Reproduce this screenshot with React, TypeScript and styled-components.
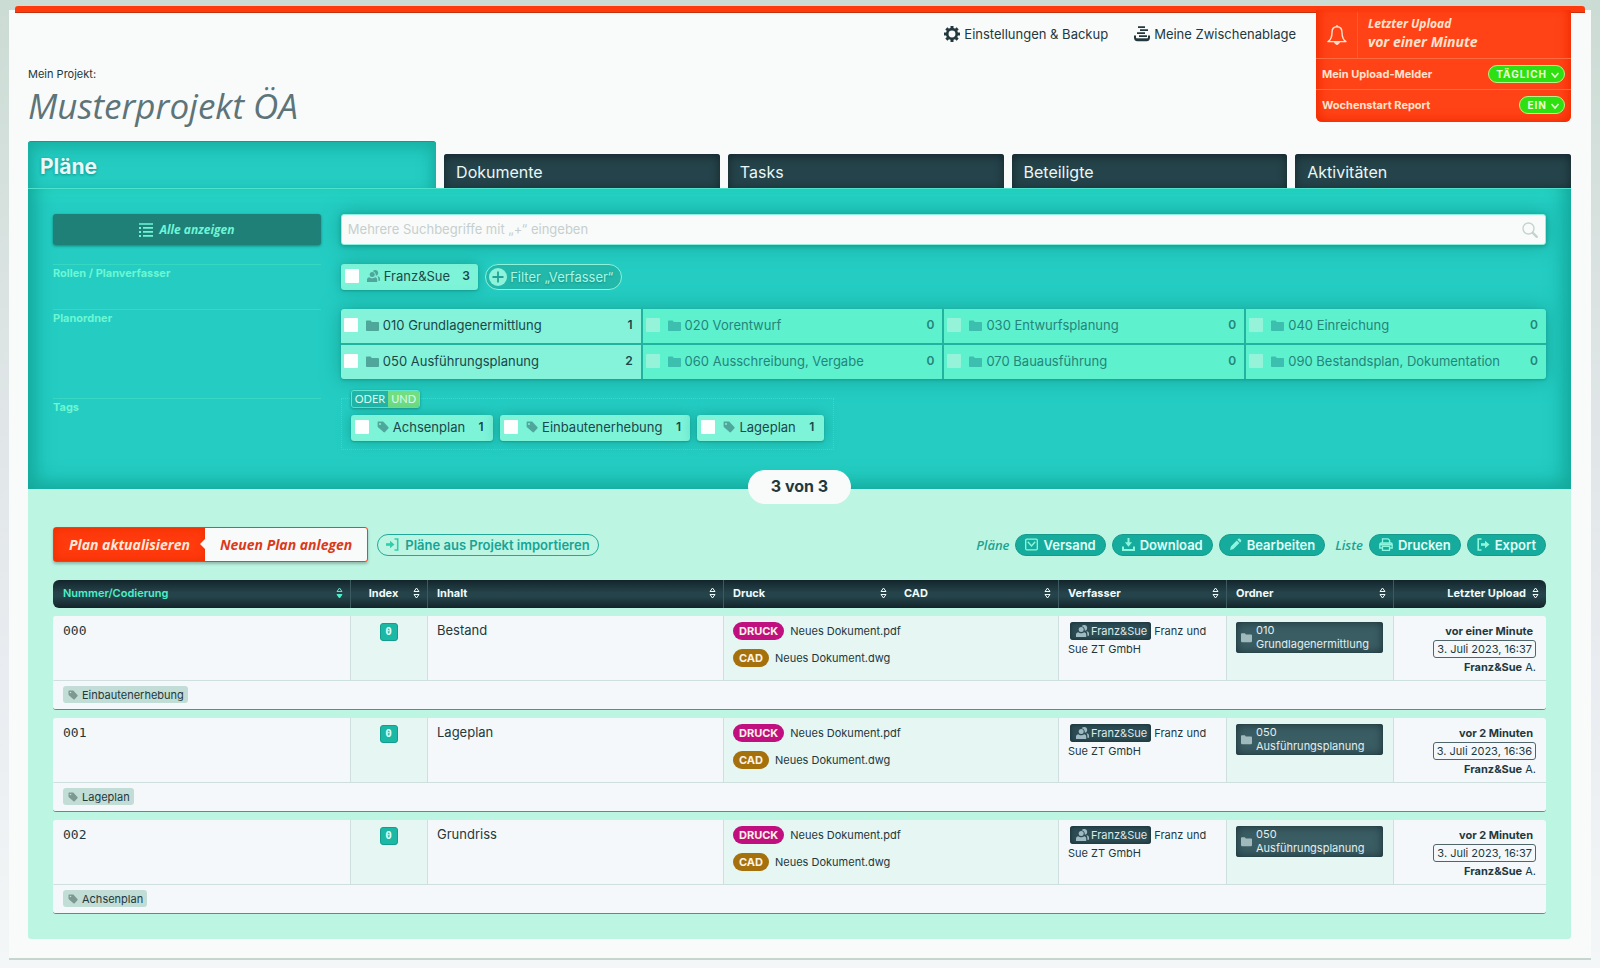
import React from "react";
import styled, { createGlobalStyle, css } from "styled-components";

const sans = `Inter, "Liberation Sans", sans-serif`;
const display = `"Open Sans", "Noto Sans", sans-serif`;
const mono = `"DejaVu Sans Mono", monospace`;

const c = {
  paper: "#f9fbfa",
  ink: "#23383d",
  red: "#ff3a0c",
  redDark: "#c5320f",
  teal: "#24ccc2",
  mint: "#bdf5e3",
  dark: "#25434a",
  darker: "#172c32",
};

const GlobalStyle = createGlobalStyle`
  *, *::before, *::after { box-sizing: border-box; }
  html { background: linear-gradient(#cbdcd4, #dde4e4 35%, #e9ecf0 70%, #f4f7f7); min-height: 100%; }
  body { margin: 0; font-family: ${sans}; font-size: 11px; line-height: 18px; color: ${c.ink}; }
  button, input, select { font: inherit; color: inherit; margin: 0; }
  button { cursor: pointer; }
  a { color: inherit; text-decoration: none; }
`;

/* ---------- icons ---------- */

const Svg = styled.svg`
  display: block;
  flex: none;
  overflow: visible;
`;

const GearIcon = () => (
  <Svg width="16" height="16" viewBox="0 0 16 16" fill="none" stroke="currentColor">
    <circle cx="8" cy="8" r="4.8" strokeWidth="2.7" />
    {[0, 45, 90, 135, 180, 225, 270, 315].map((a) => (
      <path key={a} d="M8 0v2.6" strokeWidth="3" transform={`rotate(${a} 8 8)`} />
    ))}
  </Svg>
);

const StackIcon = () => (
  <Svg width="16" height="16" viewBox="0 0 16 16" fill="none" stroke="currentColor" strokeWidth="1.8">
    <path d="M4 1.2h7M6 4.2h8M3 7.2h8M5 10.2h8" />
    <path d="M1 9.4v2.2c0 1.6 1 2.6 2.4 2.6h9.2c1.4 0 2.4-1 2.4-2.6V9.4" strokeWidth="2" />
    <path d="M2 13.4h12" strokeWidth="2.2" />
  </Svg>
);

const BellIcon = () => (
  <Svg width="20" height="22" viewBox="0 0 20 22" fill="none" stroke="currentColor" strokeWidth="1.4" strokeLinejoin="round">
    <path d="M10 1v2M10 2.8c-3.4 0-5 2.7-5 5.6 0 4.6-1 7.2-4 9.2h18c-3-2-4-4.6-4-9.2 0-2.9-1.6-5.6-5-5.6z" />
    <path d="M7.6 18.2c.3 1.4 1.2 2.2 2.4 2.2s2.1-.8 2.4-2.2z" fill="currentColor" strokeWidth="1" />
  </Svg>
);

const ListIcon = () => (
  <Svg width="14" height="14" viewBox="0 0 14 14" fill="none" stroke="currentColor" strokeWidth="1.6">
    <path d="M0 1h14M4 4.900h10M4 8.900h10M4 12.900h10" />
    <path d="M0 4.900h2M0 8.900h2M0 12.900h2" strokeWidth="2" />
  </Svg>
);

const SearchIcon = () => (
  <Svg width="16" height="16" viewBox="0 0 16 16" fill="none" stroke="currentColor">
    <circle cx="6.5" cy="6.5" r="5.5" strokeWidth="1.4" />
    <path d="M10.8 10.8l4 4" strokeWidth="2.4" strokeLinecap="round" />
  </Svg>
);

const UsersIcon = () => (
  <Svg width="13" height="12" viewBox="0 0 13 12" fill="currentColor">
    <circle cx="5.2" cy="4.6" r="2.5" />
    <path d="M0 12V9.600C0 8.200 1 7.400 2.300 7.200c.9.800 1.800 1.100 2.900 1.100s2-.3 2.900-1.100c1.300.2 2.100 1 2.100 2.400V12z" />
    <path d="M5.600 1.200C6.300.4 7.200 0 8.200 0c1.800 0 3 1.200 3 2.900 0 1.500-1 2.600-2.400 2.800.1-2.500-1-4.200-3.200-4.500zM10.300 6.300c1.900.1 2.700 1.100 2.700 2.700v1.800h-1.600C11.500 8.700 11.300 7.300 10.300 6.300z" />
  </Svg>
);

const FolderIcon = ({ size = 13 }: { size?: number }) => (
  <Svg width={size} height={size} viewBox="0 0 13 13" fill="currentColor">
    <path d="M0 2.500c0-.6.400-1 1-1h3.600l1.200 1.600H12c.6 0 1 .4 1 1V11c0 .5-.4 1-1 1H1c-.6 0-1-.5-1-1z" />
  </Svg>
);

const TagIcon = ({ size = 12 }: { size?: number }) => (
  <Svg width={size} height={size} viewBox="0 0 12 12" fill="currentColor">
    <path fillRule="evenodd" d="M.6 1.500c0-.6.400-1 1-1h4c.4 0 .7.1 1 .4l4.700 5.200c.5.500.5 1 0 1.500l-3.300 3.500c-.5.500-1 .5-1.500 0L1 6.200a1.500 1.500 0 0 1-.4-1zM3 2a1 1 0 1 0 0 2 1 1 0 0 0 0-2z" />
  </Svg>
);

const PlusIcon = () => (
  <Svg width="18" height="18" viewBox="0 0 18 18">
    <circle cx="9" cy="9" r="9" fill="#8ff3dc" />
    <path d="M9 3.5v11M3.5 9h11" stroke="#1fa497" strokeWidth="1.8" />
  </Svg>
);

const ImportIcon = () => (
  <Svg width="13" height="13" viewBox="0 0 13 13" fill="none" stroke="currentColor" strokeWidth="1.6">
    <path d="M8.5 1h3.200v11H8.500" />
    <path d="M0 6.500h5" strokeWidth="2.600" />
    <path d="M4 2.800l4.500 3.700L4 10.200z" fill="currentColor" stroke="none" />
  </Svg>
);

const MailIcon = () => (
  <Svg width="13" height="13" viewBox="0 0 13 13" fill="none" stroke="currentColor" strokeWidth="1.3">
    <path d="M1.800 1.200h9.400c.6 0 1.100.5 1.100 1.100v8.400c0 .6-.5 1.100-1.100 1.100H1.800c-.6 0-1.100-.5-1.100-1.100V2.300c0-.6.500-1.100 1.100-1.100z" />
    <path d="M2.800 3.800l3.700 4.200 3.700-4.200" strokeWidth="1.4" />
  </Svg>
);

const DownloadIcon = () => (
  <Svg width="13" height="13" viewBox="0 0 13 13" fill="none" stroke="currentColor" strokeWidth="2">
    <path d="M1 8.500v3.500h11V8.500" />
    <path d="M6.500 0v5" />
    <path d="M3 4.200h7L6.500 8.800z" fill="currentColor" stroke="none" />
  </Svg>
);

const PencilIcon = () => (
  <Svg width="13" height="13" viewBox="0 0 13 13" fill="currentColor">
    <path d="M9.300.8a1.100 1.100 0 0 1 1.500 0L12 2a1.100 1.100 0 0 1 0 1.500l-.9.900-2.700-2.700zM7.700 2.400l2.700 2.700-6 6L1 12l.9-3.500z" />
  </Svg>
);

const PrinterIcon = () => (
  <Svg width="14" height="13" viewBox="0 0 14 13" fill="none" stroke="currentColor" strokeWidth="1.3">
    <path d="M3.500 5V.8h5.600L10.600 2.300V5" />
    <path d="M3 10H.8V6.500c0-.8.600-1.500 1.400-1.500h9.600c.8 0 1.400.7 1.400 1.500V10H11" />
    <path d="M1 5.500h12v2H1z" fill="currentColor" stroke="none" />
    <path d="M3.500 8.300h7v4h-7z" />
  </Svg>
);

const ExportIcon = () => (
  <Svg width="13" height="13" viewBox="0 0 13 13" fill="none" stroke="currentColor" strokeWidth="1.6">
    <path d="M4.500 1H1.200v11h3.300" />
    <path d="M4 6.500h5" strokeWidth="2.600" />
    <path d="M8 2.800l4.500 3.700L8 10.200z" fill="currentColor" stroke="none" />
  </Svg>
);

const ChevronIcon = () => (
  <Svg width="8" height="6" viewBox="0 0 8 6" fill="none" stroke="currentColor" strokeWidth="1.5">
    <path d="M.5 1L4 5l3.500-4" />
  </Svg>
);

const SortIcon = ({ active }: { active?: boolean }) => (
  <Svg width="7" height="12" viewBox="0 0 7 12" fill="none" stroke="currentColor" strokeWidth="1">
    <path d="M1 4.500L3.500 1 6 4.500z" />
    <path d="M1 7.500L3.500 11 6 7.500z" fill={active ? "currentColor" : "none"} />
  </Svg>
);

/* ---------- page frame ---------- */

const Page = styled.main`
  margin: 10px 9px;
  padding-bottom: 19px;
  background: ${c.paper};
  box-shadow: 0 2px #c5d6cf;
`;

const TopBar = styled.div`
  position: relative;
  height: 7px;
  margin: 0 6px;
  top: -4px;
  margin-bottom: -4px;
  background: ${c.red};
  border-bottom: 1px solid ${c.redDark};
  border-radius: 3px 3px 0 0;
`;

const Inner = styled.div`
  padding: 0 20px 0 19px;
`;

const Header = styled.header`
  display: flex;
  align-items: flex-start;
  min-height: 128px;
`;

const Project = styled.div`
  flex: 1;
  padding-top: 52px;
`;

const ProjectLabel = styled.div`
  line-height: 18px;
`;

const ProjectTitle = styled.h1`
  margin: 0;
  font: italic 400 35px/46px ${display};
  color: #5d7478;
`;

const Nav = styled.nav`
  display: flex;
  gap: 26px;
  padding: 12px 20px 0 0;
  font-size: 13px;
`;

const NavLink = styled.a`
  display: flex;
  align-items: center;
  gap: 4px;
`;

const Notifier = styled.section`
  flex: none;
  width: 255px;
  margin-top: -3px;
  padding: 2px 0;
  position: relative;
  border-radius: 0 0 6px 6px;
  color: #ffe3cf;
  background: #ff4316;
  box-shadow: inset 0 -6px 12px -6px #f02c00, inset 8px 0 12px -6px #f02c00, inset -8px 0 12px -6px #f02c00;
`;

const NotifierHead = styled.div`
  display: flex;
  height: 46px;
`;

const BellCell = styled.div`
  display: flex;
  align-items: center;
  justify-content: center;
  width: 42px;
  border-right: 1px solid #ff5a2e;
`;

const LastUpload = styled.div`
  padding: 3px 10px;
  font: italic 700 12px/18px ${display};
`;

const LastUploadTime = styled.div`
  font-size: 14px;
`;

const NotifierRow = styled.label`
  display: flex;
  align-items: center;
  justify-content: space-between;
  height: 31px;
  padding: 0 6px 1px;
  border-top: 1px solid #ff6a40;
  font-size: 11px;
  font-weight: 700;
`;

const SelectWrap = styled.span`
  position: relative;
  display: flex;
  color: #eaffd8;
  & > svg {
    position: absolute;
    right: 6px;
    top: 7px;
    pointer-events: none;
  }
`;

const PillSelect = styled.select`
  appearance: none;
  field-sizing: content;
  height: 18px;
  padding: 0 17px 0 7px;
  border: 1px solid #b9f08a;
  border-radius: 9px;
  background: #2ee00f;
  font-size: 10px;
  font-weight: 700;
  line-height: 16px;
  letter-spacing: 1px;
`;

/* ---------- tabs ---------- */

const Tabs = styled.nav`
  display: grid;
  grid-template-columns: 37fr repeat(4, 25fr);
  align-items: end;
  gap: 8px;
`;

const Tab = styled.a<{ $active?: boolean }>`
  display: block;
  border-radius: 3px 3px 0 0;
  color: #eaf7f7;
  ${(p) =>
    p.$active
      ? css`
          height: 47px;
          padding: 0 12px;
          font-size: 21px;
          font-weight: 700;
          line-height: 50px;
          background: ${c.teal};
          text-shadow: 0 1px 3px #0e8f86;
          border-top: 1px solid #119c8e;
          box-shadow: inset 0 16px 16px -10px #18b0a3, inset 12px 0 16px -10px #14a397, inset -12px 0 16px -10px #14a397;
        `
      : css`
          height: 34px;
          padding: 0 12px;
          font-size: 16px;
          line-height: 36px;
          background: ${c.dark};
          box-shadow: inset 0 2px 10px #14262b;
        `}
`;

/* ---------- filter ---------- */

const FilterPanel = styled.section`
  display: grid;
  grid-template-columns: 2fr 9fr;
  column-gap: 20px;
  row-gap: 19px;
  padding: 25px 25px 39px;
  border-top: 1px solid #4be3cf;
  background: ${c.teal};
  box-shadow: inset 0 -20px 20px -14px #14a99b, inset 18px 0 20px -12px #12a396, inset -18px 0 20px -12px #12a396,
    inset 0 14px 16px -8px #2adbc8;
`;

const ShowAll = styled.button`
  display: flex;
  align-items: center;
  justify-content: center;
  gap: 6px;
  height: 31px;
  border: 0;
  border-radius: 3px;
  background: #1f8078;
  color: #6ff5d6;
  font: italic 700 12px/18px ${display};
  box-shadow: 0 1px 3px #108176;
`;

const SearchBox = styled.div`
  position: relative;
  color: #c3d4cf;
  & > svg {
    position: absolute;
    right: 8px;
    top: 8px;
  }
`;

const SearchInput = styled.input`
  display: block;
  width: 100%;
  height: 31px;
  padding: 0 6px 2px;
  border: 1px solid #8ff0df;
  border-radius: 3px;
  background: ${c.paper};
  font-size: 13px;
  outline: none;
  box-shadow: 0 0 20px #14a597, 0 1px 4px #128f83;
  &::placeholder {
    color: #c6cfce;
    opacity: 1;
  }
`;

const RowLabel = styled.div`
  border-top: 1px solid #36d8c4;
  font-size: 11px;
  font-weight: 700;
  line-height: 16px;
  color: #6cf7d3;
`;

const ChipRow = styled.div`
  display: flex;
  gap: 7px;
`;

const Box = styled.input`
  appearance: none;
  flex: none;
  width: 14px;
  height: 14px;
  border-radius: 1px;
  background: #fdfefe;
  &:disabled {
    background: #95f3da;
  }
`;

const Count = styled.span`
  margin-left: auto;
  font-size: 12px;
  font-weight: 600;
`;

const Option = styled.label`
  display: flex;
  align-items: center;
  color: #19484a;
  font-size: 13px;
  & > svg {
    margin: 0 4px 0 8px;
    color: #4fa79c;
  }
`;

const Chip = styled(Option)`
  height: 26px;
  padding: 0 0 2px 4px;
  border-radius: 3px;
  background: #7df3d8;
  box-shadow: 0 0 14px #17a598, 0 1px 2px #14988b;
  & > ${Count} {
    width: 28px;
    padding-left: 4px;
    text-align: center;
  }
`;

const AddFilter = styled.button`
  display: flex;
  align-items: center;
  gap: 3px;
  height: 26px;
  padding: 0 8px 0 3px;
  border: 1px solid #8ff3dc;
  border-radius: 13px;
  background: #22b9ab;
  color: #a9f8e6;
  font-size: 13px;
  text-shadow: 0 1px 2px #128f83;
`;

const FolderGrid = styled.div`
  display: grid;
  grid-template-columns: repeat(4, 1fr);
  gap: 2px;
  border-radius: 3px;
  overflow: hidden;
  background: #22b3a0;
  box-shadow: 0 0 20px #17a598, 0 1px 3px #14988b;
`;

const FolderTile = styled(Option)<{ $empty: boolean }>`
  height: 34px;
  padding: 0 8px 2px 3px;
  background: ${(p) => (p.$empty ? "#5ef1ce" : "#85f3d9")};
  color: ${(p) => (p.$empty ? "#23857b" : "#19484a")};
  & > svg {
    color: ${(p) => (p.$empty ? "#3cbfae" : "#4fa79c")};
  }
`;

const TagBox = styled.div`
  justify-self: start;
  padding: 0 9px 8px;
  border: 1px dotted #38d9c8;
`;

const Toggle = styled.div`
  display: flex;
  width: max-content;
  margin: -9px 0 7px;
  border: 1px solid #5fe6cf;
  border-radius: 3px;
  overflow: hidden;
  box-shadow: 0 1px 3px #118c80;
`;

const ToggleButton = styled.button<{ $on?: boolean }>`
  height: 16px;
  padding: 0 3px;
  border: 0;
  font: 400 11px/14px Lato, ${sans};
  color: #d9fdf0;
  background: ${(p) => (p.$on ? "#72de80" : "#20b5a8")};
`;

/* ---------- results ---------- */

const Results = styled.section`
  display: flow-root;
  padding: 0 25px 25px;
  border-radius: 0 0 3px 3px;
  background: ${c.mint};
`;

const ResultCount = styled.div`
  position: relative;
  width: max-content;
  margin: -19px auto 23px;
  padding: 0 23px 2px;
  border-radius: 17px;
  background: ${c.paper};
  font-size: 16px;
  font-weight: 700;
  line-height: 32px;
`;

const Toolbar = styled.div`
  display: flex;
  align-items: center;
  gap: 6px;
  margin-bottom: 18px;
`;

const PlanActions = styled.div`
  display: flex;
  margin-right: 3px;
  border: 1px solid ${c.red};
  border-radius: 3px;
  background: ${c.paper};
  box-shadow: 0 2px 3px #8fb9a9;
`;

const PlanButton = styled.button<{ $primary?: boolean }>`
  position: relative;
  height: 33px;
  padding: 0 15px;
  border: 0;
  background: none;
  color: #d93a1a;
  font: italic 700 14px/20px ${display};
  ${(p) =>
    p.$primary &&
    css`
      color: #ffe9dc;
      background: ${c.red};
      box-shadow: inset 0 0 8px #e92e00;
      &::after {
        content: "";
        position: absolute;
        right: 0;
        top: 11px;
        border: solid transparent;
        border-width: 5px 5px 5px 0;
        border-right-color: ${c.paper};
      }
    `}
`;

const ImportButton = styled.button`
  display: flex;
  align-items: center;
  gap: 6px;
  height: 22px;
  padding: 0 8px;
  border: 1px solid #22a99a;
  border-radius: 11px;
  background: none;
  color: #17a495;
  font-size: 13px;
  font-weight: 600;
  & > svg {
    color: #2fcfae;
  }
`;

const Spacer = styled.div`
  flex: 1;
`;

const GroupLabel = styled.span`
  margin-left: 4px;
  color: #1aa393;
  font: italic 600 13px/20px ${display};
`;

const ActionButton = styled.button`
  display: flex;
  align-items: center;
  gap: 5px;
  height: 22px;
  padding: 0 9px;
  border: 1px solid #159b8d;
  border-radius: 11px;
  background: #16ac9d;
  color: #e2fff7;
  font-size: 13px;
  font-weight: 600;
  line-height: 18px;
  & > svg {
    color: #8ff6de;
  }
`;

/* ---------- table ---------- */

const Table = styled.table`
  width: 100%;
  table-layout: fixed;
  border-collapse: separate;
  border-spacing: 0;
`;

const Col = styled.col<{ $w: number }>`
  width: ${(p) => p.$w}px;
`;

const HeadCell = styled.th<{ $active?: boolean; $line?: boolean }>`
  height: 28px;
  padding: 0 7px 3px ${(p) => (p.$line ? "9px" : "10px")};
  text-align: left;
  font-size: 11px;
  font-weight: ${(p) => (p.$active ? 600 : 700)};
  color: ${(p) => (p.$active ? "#4cf0c8" : "#f1fbfa")};
  background: linear-gradient(#122429, ${c.darker} 10%, ${c.dark} 45%, ${c.dark} 60%, ${c.darker} 90%, #122429);
  border-left: ${(p) => (p.$line ? "1px solid #3d5a61" : "0")};
  &:first-child {
    border-radius: 6px 0 0 6px;
  }
  &:last-child {
    border-radius: 0 6px 6px 0;
  }
`;

const SortButton = styled.button<{ $end?: boolean }>`
  display: flex;
  align-items: center;
  justify-content: ${(p) => (p.$end ? "flex-end" : "space-between")};
  gap: 6px;
  width: 100%;
  padding: 0;
  border: 0;
  background: none;
  text-align: left;
`;

const SortLabel = styled.span<{ $center?: boolean }>`
  ${(p) => p.$center && "flex: 1; text-align: center;"}
`;

const Group = styled.tbody`
  &::before {
    content: "";
    display: block;
    height: 8px;
  }
`;

const Cell = styled.td<{ $tint?: boolean; $align?: string }>`
  height: 65px;
  padding: 6px 10px 0 9px;
  vertical-align: top;
  text-align: ${(p) => p.$align || "left"};
  background: ${(p) => (p.$tint ? "#e6f6f2" : "#f5f8fa")};
  border-left: 1px solid #cfdfdd;
  border-bottom: 1px solid #cfdfdd;
  &:first-child {
    border-left-color: #f5f8fa;
    border-top-left-radius: 3px;
  }
  &:last-child {
    border-top-right-radius: 3px;
  }
`;

const TagCell = styled.td`
  height: 29px;
  padding: 0 10px 1px;
  line-height: 16px;
  background: #f5f8fa;
  border-bottom: 1px solid #5f8c86;
  border-radius: 0 0 3px 3px;
`;

const Code = styled.span`
  font: 400 13px/18px ${mono};
`;

const Title = styled.span`
  display: block;
  font-size: 13px;
  line-height: 16px;
`;

const IndexBadge = styled.span`
  display: inline-block;
  width: 18px;
  height: 18px;
  border: 1px solid #149c8e;
  border-radius: 3px;
  background: #1bb8a6;
  color: #e2fff7;
  font: 700 11px/16px ${mono};
  text-align: center;
`;

const FileRow = styled.a`
  display: flex;
  align-items: center;
  gap: 6px;
  height: 18px;
  margin-bottom: 9px;
`;

const FileBadge = styled.span<{ $cad?: boolean }>`
  padding: 0 6px;
  border-radius: 9px;
  font-weight: 700;
  line-height: 18px;
  color: #fdf3e6;
  background: ${(p) => (p.$cad ? "#a5710c" : "#c0107f")};
`;

const AuthorChip = styled.span`
  display: inline-flex;
  align-items: center;
  gap: 2px;
  height: 18px;
  margin-left: 2px;
  padding: 0 4px 0 6px;
  border-radius: 3px;
  vertical-align: top;
  background: #2c4b53;
  box-shadow: inset 0 0 4px #15292e;
  color: #dfe9ea;
  & > svg {
    color: #9fbac2;
  }
`;

const FolderChip = styled.div`
  display: flex;
  align-items: center;
  gap: 4px;
  padding: 1px 5px 2px;
  border-radius: 3px;
  background: #3a5d63;
  box-shadow: inset 0 0 10px #1c3339, inset 0 0 1px #0f1f23;
  color: #e3eeee;
  line-height: 14px;
  & > svg {
    color: #9fb9bd;
  }
`;

const DateBox = styled.time`
  display: inline-block;
  padding: 0 3px;
  border: 1px solid #51666a;
  border-radius: 3px;
  line-height: 16px;
`;

const UploadLine = styled.div<{ $strong?: boolean }>`
  height: 18px;
  padding-right: ${(p) => (p.$strong ? "3px" : "0")};
  font-weight: ${(p) => (p.$strong ? 700 : 400)};
  white-space: nowrap;
`;

const TagLabel = styled.span`
  display: inline-flex;
  align-items: center;
  gap: 4px;
  height: 17px;
  padding: 0 4px 0 5px;
  border-radius: 3px;
  vertical-align: middle;
  background: #c2ddd5;
  & > svg {
    color: #7d9791;
  }
`;

/* ---------- data ---------- */

const folders = [
  ["010 Grundlagenermittlung", 1],
  ["020 Vorentwurf", 0],
  ["030 Entwurfsplanung", 0],
  ["040 Einreichung", 0],
  ["050 Ausführungsplanung", 2],
  ["060 Ausschreibung, Vergabe", 0],
  ["070 Bauausführung", 0],
  ["090 Bestandsplan, Dokumentation", 0],
] as const;

const tags = ["Achsenplan", "Einbautenerhebung", "Lageplan"];

const columns = [
  { label: "Nummer/Codierung", w: 297, active: true },
  { label: "Index", w: 77, line: true, center: true },
  { label: "Inhalt", w: 296, line: true },
  { label: "Druck", w: 171, line: true },
  { label: "CAD", w: 164 },
  { label: "Verfasser", w: 168, line: true },
  { label: "Ordner", w: 167, line: true },
  { label: "Letzter Upload", w: 153, line: true, end: true },
];

const plans = [
  { code: "000", title: "Bestand", folder: ["010", "Grundlagenermittlung"], ago: "vor einer Minute", date: "3. Juli 2023, 16:37", tag: "Einbautenerhebung" },
  { code: "001", title: "Lageplan", folder: ["050", "Ausführungsplanung"], ago: "vor 2 Minuten", date: "3. Juli 2023, 16:36", tag: "Lageplan" },
  { code: "002", title: "Grundriss", folder: ["050", "Ausführungsplanung"], ago: "vor 2 Minuten", date: "3. Juli 2023, 16:37", tag: "Achsenplan" },
];

/* ---------- view ---------- */

export default function App() {
  return (
    <>
      <GlobalStyle />
      <Page>
        <TopBar />
        <Inner>
          <Header>
            <Project>
              <ProjectLabel>Mein Projekt:</ProjectLabel>
              <ProjectTitle>Musterprojekt ÖA</ProjectTitle>
            </Project>
            <Nav>
              <NavLink href="#einstellungen"><GearIcon />Einstellungen &amp; Backup</NavLink>
              <NavLink href="#zwischenablage"><StackIcon />Meine Zwischenablage</NavLink>
            </Nav>
            <Notifier>
              <NotifierHead>
                <BellCell><BellIcon /></BellCell>
                <LastUpload>
                  Letzter Upload
                  <LastUploadTime>vor einer Minute</LastUploadTime>
                </LastUpload>
              </NotifierHead>
              <NotifierRow>
                Mein Upload-Melder
                <SelectWrap>
                  <PillSelect defaultValue="TÄGLICH"><option>TÄGLICH</option><option>AUS</option></PillSelect>
                  <ChevronIcon />
                </SelectWrap>
              </NotifierRow>
              <NotifierRow>
                Wochenstart Report
                <SelectWrap>
                  <PillSelect defaultValue="EIN"><option>EIN</option><option>AUS</option></PillSelect>
                  <ChevronIcon />
                </SelectWrap>
              </NotifierRow>
            </Notifier>
          </Header>

          <Tabs>
            <Tab href="#plaene" $active>Pläne</Tab>
            <Tab href="#dokumente">Dokumente</Tab>
            <Tab href="#tasks">Tasks</Tab>
            <Tab href="#beteiligte">Beteiligte</Tab>
            <Tab href="#aktivitaeten">Aktivitäten</Tab>
          </Tabs>

          <FilterPanel>
            <ShowAll type="button"><ListIcon />Alle anzeigen</ShowAll>
            <SearchBox>
              <SearchInput type="text" aria-label="Suche" placeholder="Mehrere Suchbegriffe mit „+“ eingeben" />
              <SearchIcon />
            </SearchBox>

            <RowLabel>Rollen / Planverfasser</RowLabel>
            <ChipRow>
              <Chip><Box type="checkbox" /><UsersIcon />Franz&amp;Sue<Count>3</Count></Chip>
              <AddFilter type="button"><PlusIcon />Filter „Verfasser“</AddFilter>
            </ChipRow>

            <RowLabel>Planordner</RowLabel>
            <FolderGrid>
              {folders.map(([name, n]) => (
                <FolderTile key={name} $empty={n === 0}>
                  <Box type="checkbox" disabled={n === 0} />
                  <FolderIcon />
                  {name}
                  <Count>{n}</Count>
                </FolderTile>
              ))}
            </FolderGrid>

            <RowLabel>Tags</RowLabel>
            <TagBox>
              <Toggle>
                <ToggleButton type="button">ODER</ToggleButton>
                <ToggleButton type="button" $on>UND</ToggleButton>
              </Toggle>
              <ChipRow>
                {tags.map((t) => (
                  <Chip key={t}><Box type="checkbox" /><TagIcon />{t}<Count>1</Count></Chip>
                ))}
              </ChipRow>
            </TagBox>
          </FilterPanel>

          <Results>
            <ResultCount>3 von 3</ResultCount>
            <Toolbar>
              <PlanActions>
                <PlanButton type="button" $primary>Plan aktualisieren</PlanButton>
                <PlanButton type="button">Neuen Plan anlegen</PlanButton>
              </PlanActions>
              <ImportButton type="button"><ImportIcon />Pläne aus Projekt importieren</ImportButton>
              <Spacer />
              <GroupLabel>Pläne</GroupLabel>
              <ActionButton type="button"><MailIcon />Versand</ActionButton>
              <ActionButton type="button"><DownloadIcon />Download</ActionButton>
              <ActionButton type="button"><PencilIcon />Bearbeiten</ActionButton>
              <GroupLabel>Liste</GroupLabel>
              <ActionButton type="button"><PrinterIcon />Drucken</ActionButton>
              <ActionButton type="button"><ExportIcon />Export</ActionButton>
            </Toolbar>

            <Table>
              <colgroup>
                {columns.map((col) => <Col key={col.label} $w={col.w} />)}
              </colgroup>
              <thead>
                <tr>
                  {columns.map((col) => (
                    <HeadCell key={col.label} $active={col.active} $line={col.line}>
                      <SortButton type="button" $end={col.end}>
                        <SortLabel $center={col.center}>{col.label}</SortLabel>
                        <SortIcon active={col.active} />
                      </SortButton>
                    </HeadCell>
                  ))}
                </tr>
              </thead>
              {plans.map((p) => (
                <Group key={p.code}>
                  <tr>
                    <Cell><Code>{p.code}</Code></Cell>
                    <Cell $tint $align="center"><IndexBadge>0</IndexBadge></Cell>
                    <Cell><Title>{p.title}</Title></Cell>
                    <Cell $tint colSpan={2}>
                      <FileRow href="#pdf"><FileBadge>DRUCK</FileBadge>Neues Dokument.pdf</FileRow>
                      <FileRow href="#dwg"><FileBadge $cad>CAD</FileBadge>Neues Dokument.dwg</FileRow>
                    </Cell>
                    <Cell><AuthorChip><UsersIcon />Franz&amp;Sue</AuthorChip> Franz und Sue ZT GmbH</Cell>
                    <Cell $tint>
                      <FolderChip>
                        <FolderIcon size={11} />
                        <span>{p.folder[0]}<br />{p.folder[1]}</span>
                      </FolderChip>
                    </Cell>
                    <Cell $align="right">
                      <UploadLine $strong>{p.ago}</UploadLine>
                      <UploadLine><DateBox>{p.date}</DateBox></UploadLine>
                      <UploadLine><b>Franz&amp;Sue</b> A.</UploadLine>
                    </Cell>
                  </tr>
                  <tr>
                    <TagCell colSpan={8}><TagLabel><TagIcon size={10} />{p.tag}</TagLabel></TagCell>
                  </tr>
                </Group>
              ))}
            </Table>
          </Results>
        </Inner>
      </Page>
    </>
  );
}
